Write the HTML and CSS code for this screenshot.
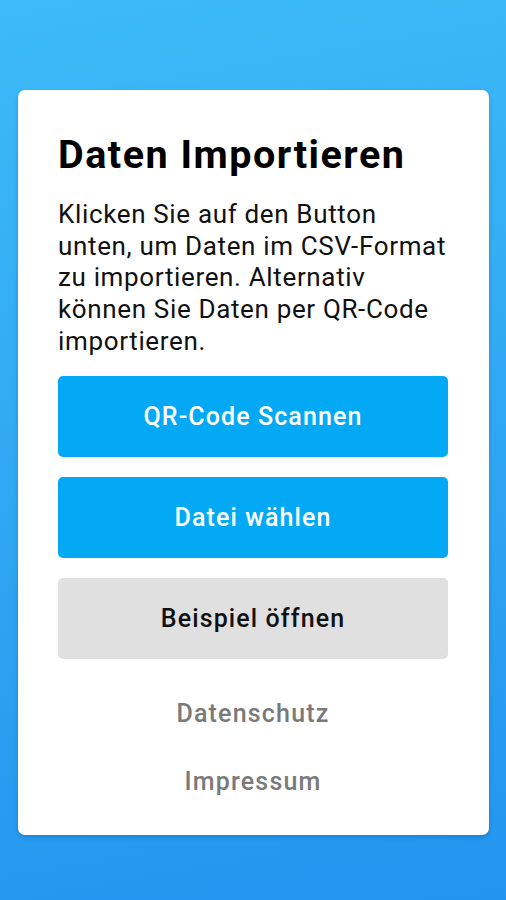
FILE: index.html
```html
<!DOCTYPE html>
<html>
<head>
    <title>Daten Importieren</title>
    <link rel="stylesheet" href="styles.css">
</head>
<body>
    <div class="card">
        <h1 class="title">Daten Importieren</h1>
        <p class="intro">Klicken Sie auf den Button<br>unten, um Daten im CSV-Format<br>zu importieren. Alternativ<br>können Sie Daten per QR-Code<br>importieren.</p>
        <div class="actions">
            <button type="button" class="btn btn-primary">QR-Code Scannen</button>
            <button type="button" class="btn btn-primary">Datei wählen</button>
            <button type="button" class="btn btn-grey">Beispiel öffnen</button>
        </div>
        <div class="links">
            <a href="#" class="link">Datenschutz</a>
            <a href="#" class="link">Impressum</a>
        </div>
    </div>
</body>
</html>
```

FILE: styles.css
```css
html, body {
    margin: 0;
    height: 900px;
}

body {
    background: linear-gradient(170deg, #3dbaf7 0%, #31a8f2 50%, #2295ef 100%);
    font-family: Roboto, "Noto Sans", sans-serif;
    padding-top: 90px;
    box-sizing: border-box;
}

.card {
    background: #fff;
    margin: 0 17px 0 18px;
    height: 745px;
    border-radius: 7px;
    padding: 40px 41px 0 40px;
    box-sizing: border-box;
    box-shadow: 0 2px 4px rgba(0, 50, 120, 0.25);
}

.title {
    margin: 0;
    font-size: 39.5px;
    font-weight: 700;
    letter-spacing: 1.5px;
    line-height: 50px;
    color: #000;
}

.intro {
    margin: 19px 0 0 0;
    font-size: 26px;
    letter-spacing: 0.65px;
    line-height: 31.7px;
    white-space: nowrap;
    color: #111;
}

.actions {
    display: flex;
    flex-direction: column;
    gap: 20px;
    margin-top: 18px;
}

.btn {
    display: block;
    width: 100%;
    height: 81px;
    border: 0;
    border-radius: 5px;
    font-family: Roboto, "Noto Sans", sans-serif;
    font-size: 25px;
    font-weight: 500;
    letter-spacing: 1.1px;
}

.btn-primary {
    background-color: #03a9f4;
    color: #fff;
}

.btn-grey {
    background-color: #e0e0e0;
    color: #111;
}

.links {
    display: flex;
    flex-direction: column;
    align-items: center;
    gap: 34px;
    margin-top: 38px;
}

.link {
    font-size: 25px;
    font-weight: 500;
    letter-spacing: 1.2px;
    color: #7a7a7a;
    text-decoration: none;
    line-height: 34px;
}
```
